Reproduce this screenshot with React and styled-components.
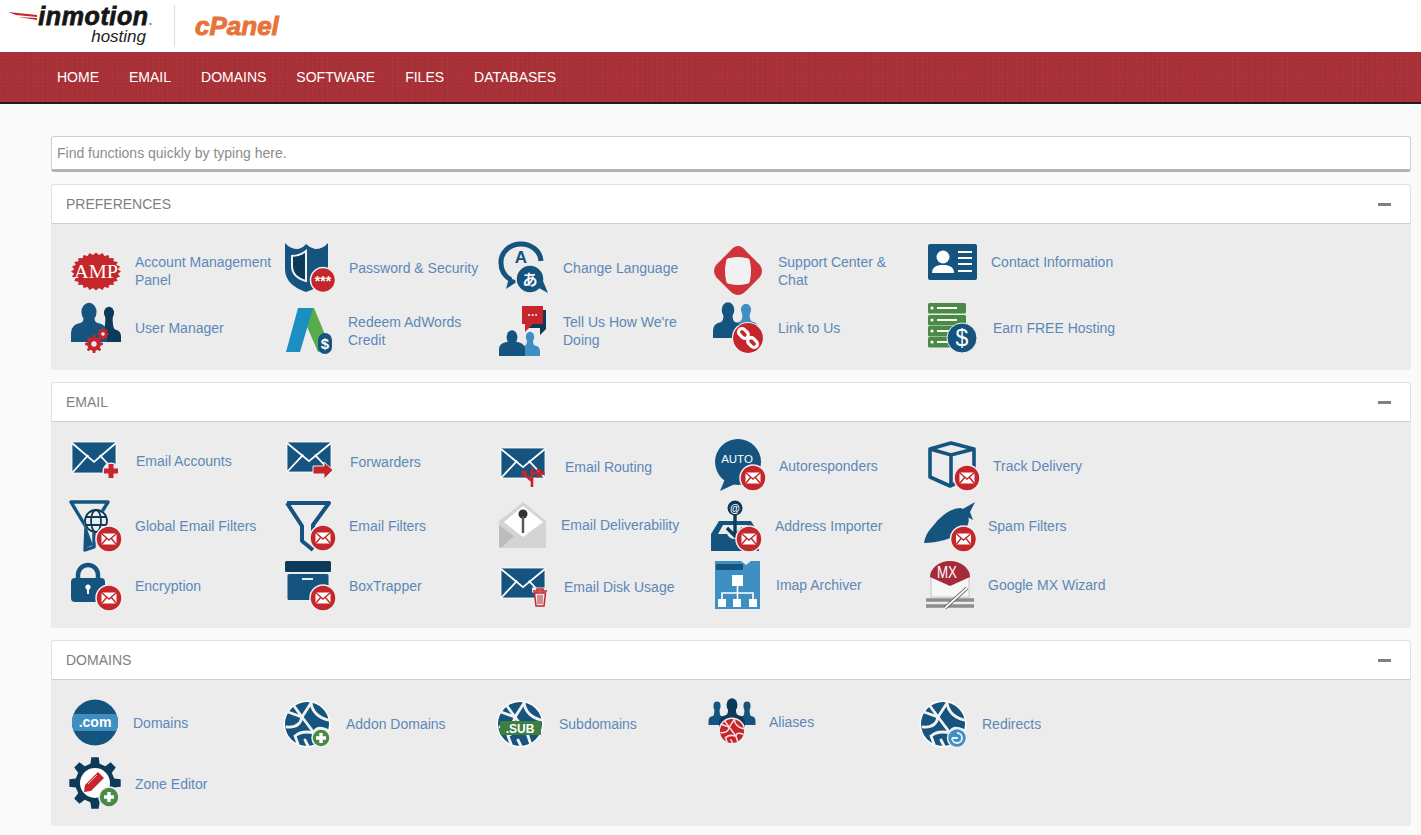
import React from 'react';
import styled, { createGlobalStyle } from 'styled-components';

const NAVY = '#165480';
const DARK = '#0e3a5a';
const RED = '#c4262b';
const GREEN = '#4a8a46';
const SKY = '#3f8fc2';
const PANEL = '#ececec';

const GlobalStyle = createGlobalStyle`
  html, body {
    margin: 0;
    padding: 0;
    background: #fafafa;
    font-family: "Liberation Sans", Arial, sans-serif;
  }
`;

const TopBar = styled.header`
  height: 52px;
  background: #fff;
  display: flex;
  align-items: center;
  padding-left: 8px;
`;

const Swoosh = styled.svg`
  flex: none;
  margin: -20px -29px 0 0;
`;

const Brand = styled.div`
  width: 144px;
  display: flex;
  flex-direction: column;
  align-items: flex-end;
  margin-top: 1px;
`;

const BrandRow = styled.div`
  display: flex;
  align-items: center;
  height: 20px;
`;

const BrandName = styled.span`
  font-size: 25px;
  font-weight: bold;
  font-style: italic;
  letter-spacing: 0.6px;
  color: #161616;
  -webkit-text-stroke: 0.8px #161616;
`;

const BrandDot = styled.span`
  font-size: 12px;
  font-weight: bold;
  color: #777;
  margin-top: 9px;
`;

const BrandSub = styled.span`
  font-size: 17px;
  font-style: italic;
  color: #222;
  line-height: 21px;
  margin-right: 6px;
`;

const Divider = styled.div`
  width: 1px;
  height: 42px;
  background: #ddd;
  margin: 0 20px 0 22px;
`;

const CPanelMark = styled.span`
  font-size: 26px;
  font-weight: bold;
  font-style: italic;
  color: #e8733a;
  -webkit-text-stroke: 1px #e8733a;
`;

const NavBar = styled.nav`
  height: 50px;
  border-bottom: 2px solid #241a1c;
  padding-left: 57px;
  display: flex;
  align-items: center;
  gap: 30px;
  background-color: #aa3138;
  background-image:
    radial-gradient(circle, rgba(0, 0, 0, 0.07) 0.6px, transparent 1px),
    radial-gradient(circle, rgba(255, 255, 255, 0.04) 0.6px, transparent 1px),
    radial-gradient(circle, rgba(0, 0, 0, 0.05) 0.8px, transparent 1.2px);
  background-size: 3px 3px, 5px 4px, 7px 5px;
`;

const NavLink = styled.a`
  color: #fff;
  font-size: 14px;
  text-transform: uppercase;
`;

const Main = styled.main`
  padding: 32px 10px 9px 51px;
  display: flex;
  flex-direction: column;
  gap: 12px;
`;

const Search = styled.input`
  display: block;
  width: 100%;
  box-sizing: border-box;
  height: 36px;
  padding: 0 5px;
  border: 1px solid #cfcfcf;
  border-bottom: 3px solid #b4b4b4;
  border-radius: 3px;
  background: #fff;
  font-family: inherit;
  font-size: 14px;
  outline: none;

  &::placeholder {
    color: #8c8c8c;
    opacity: 1;
  }
`;

const Panel = styled.section`
  border-radius: 3px;
  overflow: hidden;
  background: ${PANEL};
`;

const PanelHead = styled.div`
  height: 40px;
  box-sizing: border-box;
  background: #fff;
  border: 1px solid #e2e2e2;
  border-bottom: 1px solid #cfcfcf;
  border-radius: 3px 3px 0 0;
  padding: 0 19px 0 14px;
  display: flex;
  align-items: center;
  justify-content: space-between;
  font-size: 14px;
  color: #808080;
  text-transform: uppercase;
`;

const Collapse = styled.span`
  width: 13px;
  height: 3px;
  background: #808080;
`;

const PanelBody = styled.div`
  display: grid;
  grid-template-columns: repeat(5, 214px);
  grid-auto-rows: 60px;
  padding: 14px 0 12px 20px;
`;

const Item = styled.a`
  display: flex;
  align-items: center;
`;

const Label = styled.span`
  margin-left: ${(p) => p.$gap}px;
  margin-top: ${(p) => p.$shift * 2}px;
  font-size: 14px;
  line-height: 18px;
  color: #5c88b8;
  white-space: pre-line;
`;

const Glyph = styled.svg`
  width: 50px;
  height: 50px;
  flex: none;
  overflow: visible;
`;

const Icon = ({ children }) => <Glyph viewBox="0 0 50 50">{children}</Glyph>;

const MailBadge = ({ cx = 38, cy = 37, r = 12 }) => (
  <g>
    <circle cx={cx} cy={cy} r={r + 1} fill={RED} stroke="#efefef" strokeWidth="1.5" />
    <rect x={cx - 7.5} y={cy - 5.5} width="15" height="11" rx="1.5" fill="#fff" />
    <path
      d={`M${cx - 7} ${cy - 5}L${cx} ${cy + 1}L${cx + 7} ${cy - 5}M${cx - 7} ${cy + 5}L${cx - 2} ${cy - 1}M${cx + 7} ${cy + 5}L${cx + 2} ${cy - 1}`}
      fill="none"
      stroke={RED}
      strokeWidth="1.4"
    />
  </g>
);

const Envelope = ({ x, y, w = 44, h = 30 }) => (
  <g>
    <rect x={x} y={y} width={w} height={h} fill={NAVY} stroke="#fff" strokeWidth="0.8" />
    <path
      d={`M${x} ${y + 1}L${x + w / 2} ${y + h * 0.64}L${x + w} ${y + 1}M${x} ${y + h}L${x + w * 0.37} ${y + h * 0.42}M${x + w} ${y + h}L${x + w * 0.63} ${y + h * 0.42}`}
      fill="none"
      stroke="#fff"
      strokeWidth="1.8"
    />
  </g>
);

const Person = ({ x, y, w, b, fill }) => (
  <g fill={fill}>
    <ellipse cx={x} cy={y} rx={w * 0.42} ry={w * 0.52} />
    <path
      d={`M${x - w} ${b}V${b - w * 0.5}Q${x - w} ${b - w * 0.95} ${x - w * 0.5} ${b - w * 1.05}Q${x - w * 0.3} ${b - w * 1.1} ${x - w * 0.3} ${y + w * 0.3}H${x + w * 0.3}Q${x + w * 0.3} ${b - w * 1.1} ${x + w * 0.5} ${b - w * 1.05}Q${x + w} ${b - w * 0.95} ${x + w} ${b - w * 0.5}V${b}Z`}
    />
  </g>
);

const gearPath = (cx, cy, r, teeth) => {
  const pts = [];
  const step = (Math.PI * 2) / teeth;
  for (let i = 0; i < teeth; i++) {
    const a = i * step;
    [
      [-0.3, 0.76],
      [-0.18, 1],
      [0.18, 1],
      [0.3, 0.76],
    ].forEach(([o, k]) => {
      pts.push(
        `${(cx + Math.cos(a + o * step) * r * k).toFixed(1)},${(cy + Math.sin(a + o * step) * r * k).toFixed(1)}`,
      );
    });
  }
  return pts.join(' ');
};

const Gear = ({ cx, cy, r, teeth = 8, fill = RED, hole = PANEL }) => (
  <g>
    <polygon points={gearPath(cx, cy, r, teeth)} fill={fill} />
    <circle cx={cx} cy={cy} r={r * 0.3} fill={hole} />
  </g>
);

const burstPoints = () => {
  const pts = [];
  for (let i = 0; i < 48; i++) {
    const a = (i / 48) * Math.PI * 2;
    const k = i % 2 ? 0.88 : 1;
    pts.push(`${(25 + Math.cos(a) * 25 * k).toFixed(1)},${(28.5 + Math.sin(a) * 19 * k).toFixed(1)}`);
  }
  return pts.join(' ');
};

const Globe = ({ cx, cy, r = 22, fill = NAVY, ring = true }) => {
  const k = r / 22;
  return (
    <g>
      {ring && <circle cx={cx} cy={cy} r={r + 1.5} fill="#fff" />}
      <circle cx={cx} cy={cy} r={r} fill={fill} />
      <g
        transform={`translate(${cx} ${cy}) scale(${k})`}
        fill="none"
        stroke={ring ? '#f2f2f2' : '#f7dddd'}
        strokeWidth="2.8"
        strokeLinecap="round"
      >
        <path d="M-19-12L-5-7L4-21" />
        <path d="M-5-7L7 9L11 21" />
        <path d="M-5-7Q-7 4-20 3" />
        <path d="M4-21Q6-8 21-4" />
        <path d="M7 9Q-5 6-12 12L-9 20" />
        <path d="M7 9Q9 1 20 6" />
        <path d="M-2 16L1 22" />
        <path d="M-13-18L-5-7" />
      </g>
    </g>
  );
};

const GreenPlus = ({ cx, cy, r = 9 }) => (
  <g>
    <circle cx={cx} cy={cy} r={r} fill={GREEN} stroke="#f0f0f0" strokeWidth="1.5" />
    <path d={`M${cx - 5} ${cy}H${cx + 5}M${cx} ${cy - 5}V${cy + 5}`} stroke="#fff" strokeWidth="3.4" />
  </g>
);

const AmpIcon = () => (
  <Icon>
    <polygon points={burstPoints()} fill={RED} />
    <text
      x="25"
      y="35"
      textAnchor="middle"
      fontFamily="Liberation Serif"
      fontSize="19"
      fill="#fff"
      textLength="44"
      lengthAdjust="spacingAndGlyphs"
    >
      AMP
    </text>
  </Icon>
);

const ShieldIcon = () => (
  <Icon>
    <path d="M0 0Q5 6 13 6Q18 5 21 1Q25 5 30 6Q38 6 43 0V26Q43 42 21 49Q0 42 0 26Z" fill={NAVY} />
    <path d="M7 13Q15 13 21 8V38Q7 34 7 23Z" fill={DARK} stroke="#f2f2f2" strokeWidth="2" />
    <circle cx="38" cy="37" r="12.5" fill={RED} stroke="#efefef" strokeWidth="1.5" />
    <text x="38" y="43" textAnchor="middle" fontFamily="Liberation Sans" fontSize="14" fontWeight="bold" fill="#fff">
      ***
    </text>
  </Icon>
);

const LanguageIcon = () => (
  <Icon>
    <path d="M12 37Q2 31 2 20A20 18 0 0 1 42 18" fill="none" stroke={NAVY} strokeWidth="5" />
    <path d="M10 35L7 46L19 38Z" fill={NAVY} />
    <text x="22" y="20" textAnchor="middle" fontFamily="Liberation Sans" fontSize="17" fontWeight="bold" fill={NAVY}>
      A
    </text>
    <circle cx="31" cy="36" r="14" fill={NAVY} stroke={PANEL} strokeWidth="1.5" />
    <path d="M38 44L49 50L44 38Z" fill={NAVY} />
    <text x="31" y="42" textAnchor="middle" fontFamily="Noto Sans CJK JP" fontSize="15" fontWeight="bold" fill="#fff">
      あ
    </text>
  </Icon>
);

const SupportIcon = () => (
  <Icon>
    <path d="M25 3Q29 3 33 8L47 22Q51 28 47 34L33 48Q25 56 17 48L3 34Q-1 28 3 22L17 8Q21 3 25 3Z" fill="#d0343a" />
    <path d="M13 19Q13 15 17 15Q25 13 33 15Q37 15 37 19Q39 28 37 37Q37 41 33 41Q25 43 17 41Q13 41 13 37Q11 28 13 19Z" fill="#f1f1f1" />
  </Icon>
);

const ContactIcon = () => (
  <Icon>
    <rect x="1" y="1" width="49" height="36" rx="2" fill={NAVY} />
    <circle cx="16" cy="14" r="6.5" fill="#fff" />
    <path d="M5 30Q5 23 13 22H19Q27 23 27 30Z" fill="#fff" />
    <path d="M31 9H45M31 15H45M31 21H45M31 28H45" stroke="#fff" strokeWidth="2.2" />
  </Icon>
);

const UsersGearIcon = () => (
  <Icon>
    <Person x={38} y={10} w={12} b={39} fill={DARK} />
    <Person x={18} y={9} w={18} b={39} fill={NAVY} />
    <Gear cx={23} cy={41} r={9} />
    <Gear cx={32} cy={31} r={6} />
  </Icon>
);

const AdwordsIcon = () => (
  <Icon>
    <path d="M14 5H29L46 46L33 49Z" fill="#58ac4b" />
    <path d="M13 5H28L15 49H1Z" fill="#1b8fc0" />
    <rect x="33" y="30" width="14" height="21" rx="7" fill={NAVY} />
    <text x="40" y="46" textAnchor="middle" fontFamily="Liberation Sans" fontSize="15" fontWeight="bold" fill="#fff">
      $
    </text>
  </Icon>
);

const FeedbackIcon = () => (
  <Icon>
    <path d="M27 7H47V26L41 32V25H27Z" fill={DARK} />
    <path d="M23 3H44V21H34L26 29V21H23Z" fill={RED} />
    <path d="M29 12H38" stroke="#fff" strokeWidth="1.6" strokeDasharray="2 1.6" />
    <Person x={31} y={34} w={10} b={53} fill={SKY} />
    <Person x={13} y={34} w={13} b={53} fill={NAVY} />
  </Icon>
);

const LinkIcon = () => (
  <Icon>
    <Person x={33} y={7} w={12} b={31} fill={SKY} />
    <Person x={15} y={7} w={15} b={35} fill={NAVY} />
    <circle cx="35" cy="35" r="15.5" fill={RED} stroke="#efefef" strokeWidth="1.2" />
    <g fill="none" stroke="#fff" strokeWidth="3.2" transform="rotate(45 35 35)">
      <rect x="23" y="31.5" width="11" height="7" rx="3.5" />
      <rect x="36" y="31.5" width="11" height="7" rx="3.5" />
    </g>
  </Icon>
);

const HostingIcon = () => (
  <Icon>
    {[0, 12, 23, 34].map((y) => (
      <g key={y}>
        <rect x="1" y={y} width="38" height="10.5" rx="1.5" fill={GREEN} />
        <circle cx="5" cy={y + 5} r="1.6" fill="#fff" />
        <path d={`M10 ${y + 5}H30`} stroke="#fff" strokeWidth="2" />
      </g>
    ))}
    <circle cx="35" cy="35" r="15" fill={NAVY} stroke="#efefef" strokeWidth="1" />
    <text x="35" y="43" textAnchor="middle" fontFamily="Liberation Sans" fontSize="23" fill="#fff">
      $
    </text>
  </Icon>
);

const EmailPlusIcon = () => (
  <Icon>
    <Envelope x={1} y={1} h={31} />
    <circle cx="40" cy="30" r="8.5" fill={PANEL} />
    <path d="M33 30H47M40 23V37" stroke={RED} strokeWidth="5" />
  </Icon>
);

const ForwardIcon = () => (
  <Icon>
    <Envelope x={2} y={1} h={30} />
    <path d="M28 25H39V21L48 29L39 38V33H28Z" fill={RED} stroke={PANEL} strokeWidth="1" />
  </Icon>
);

const RoutingIcon = () => (
  <Icon>
    <Envelope x={2} y={7} h={30} />
    <path d="M24 32L33 40L33 30M33 26V46M33 32L42 32M38 28L44 32L38 36M24 35V31H28" fill="none" stroke={RED} strokeWidth="2.6" />
  </Icon>
);

const AutoIcon = () => (
  <Icon>
    <circle cx="25" cy="21" r="23" fill={NAVY} />
    <path d="M12 38L7 50L24 42Z" fill={NAVY} />
    <text x="24" y="22" textAnchor="middle" fontFamily="Liberation Sans" fontSize="11.5" fill="#fff">
      AUTO
    </text>
    <MailBadge cx={40} cy={37} />
  </Icon>
);

const BoxIcon = () => (
  <Icon>
    <path d="M3 8L24 2L47 8V34L23 45L3 36Z" fill="none" stroke={NAVY} strokeWidth="3.6" strokeLinejoin="round" />
    <path d="M3 8L24 14L47 8M24 14V44" fill="none" stroke={NAVY} strokeWidth="3.6" />
    <MailBadge cx={40} cy={37} />
  </Icon>
);

const GlobalFilterIcon = () => (
  <Icon>
    <path d="M0 1H37L23 24V46L14 49L15 26Z" fill="none" stroke={NAVY} strokeWidth="3.4" strokeLinejoin="round" />
    <path d="M16 28L15 47L22 44Z" fill={NAVY} />
    <circle cx="25" cy="20" r="12" fill={PANEL} />
    <g fill="none" stroke={DARK} strokeWidth="1.8">
      <circle cx="25" cy="20" r="11" />
      <ellipse cx="25" cy="20" rx="5" ry="11" />
      <path d="M14 16H36M14 24H36" />
    </g>
    <MailBadge cx={38} cy={38} />
  </Icon>
);

const FilterIcon = () => (
  <Icon>
    <path d="M2 2H44L28 24V40M2 2L17 25V40L28 49" fill="none" stroke={NAVY} strokeWidth="4" strokeLinejoin="round" />
    <MailBadge cx={38} cy={37} />
  </Icon>
);

const DeliverabilityIcon = () => (
  <Icon>
    <path d="M24 1L47 20V47H3Q0 47 0 43V20Z" fill="#d4d4d4" />
    <path d="M24 5L44 21L24 36L5 21Z" fill="#fff" />
    <path d="M0 24L15 35L2 47Q0 47 0 43Z" fill="#bcbcbc" />
    <circle cx="24" cy="13" r="4.5" fill="#333" />
    <path d="M24 15V32" stroke="#555" strokeWidth="2.4" />
  </Icon>
);

const ImporterIcon = () => (
  <Icon>
    <path d="M6 20H38L46 33V50H-2V33Z" fill={NAVY} />
    <path d="M5 33L10 24H34L39 33H30Q28 38 22 38Q16 38 14 33Z" fill={PANEL} />
    <path d="M22 10V34M14 27L22 35L30 27" fill="none" stroke={DARK} strokeWidth="3.4" />
    <circle cx="22" cy="7" r="7.5" fill={DARK} />
    <text x="22" y="10.5" textAnchor="middle" fontFamily="Liberation Sans" fontSize="10" fontWeight="bold" fill="#fff">
      @
    </text>
    <MailBadge cx={36} cy={38} />
  </Icon>
);

const SpamIcon = () => (
  <Icon>
    <path d="M-3 42C-1 30 6 26 10 20C16 14 24 7 34 7C44 12 44 24 36 30C26 38 10 42-3 42Z" fill={NAVY} />
    <path d="M34 9L48 1L43 11L46 19L37 14Z" fill={NAVY} />
    <MailBadge cx={36.5} cy={38} />
  </Icon>
);

const LockIcon = () => (
  <Icon>
    <path d="M7 19V14A10 10 0 0 1 27 14V19" fill="none" stroke={NAVY} strokeWidth="4.5" />
    <rect x="0" y="17" width="34" height="24" rx="4" fill={NAVY} />
    <circle cx="17" cy="26" r="2.6" fill="#fff" />
    <path d="M17 27V33" stroke="#fff" strokeWidth="2" />
    <MailBadge cx={38} cy={37} />
  </Icon>
);

const ArchiveBoxIcon = () => (
  <Icon>
    <rect x="0" y="0" width="46" height="11" rx="1.5" fill={DARK} />
    <rect x="2.5" y="13" width="41" height="26" rx="1.5" fill={NAVY} />
    <path d="M17 18H28" stroke="#fff" strokeWidth="1.8" />
    <MailBadge cx={38} cy={37} />
  </Icon>
);

const EmailTrashIcon = () => (
  <Icon>
    <Envelope x={2} y={7} h={30} />
    <path d="M33 29H49" stroke={PANEL} strokeWidth="5" />
    <path d="M34 30H48M38 30V28H44V30M35.5 32L37 45H45L46.5 32Z" fill={PANEL} stroke={RED} strokeWidth="1.5" />
    <path d="M39 34V43M41 34V43M43 34V43" stroke={RED} strokeWidth="1" />
  </Icon>
);

const ImapIcon = () => (
  <Icon>
    <path d="M2 0H28L33 4L38 0H47V48H2Z" fill={SKY} />
    <rect x="3" y="3" width="27" height="6" rx="1" fill={NAVY} />
    <rect x="19" y="14" width="11" height="11" fill="#fff" />
    <path d="M24.5 25V32M9 38V32H40V38M24.5 32V38" fill="none" stroke="#fff" strokeWidth="1.6" />
    <path d="M5 38H13V46H5ZM20 38H28V46H20ZM36 38H44V46H36Z" fill="#fff" />
  </Icon>
);

const MxIcon = () => (
  <Icon>
    <rect x="4" y="11" width="38" height="25" fill="#f6f6f6" stroke="#bbb" strokeWidth="0.8" />
    <path d="M3 16A20 16 0 0 1 43 16L23 25Z" fill="#a52a3a" />
    <text
      x="20"
      y="17"
      textAnchor="middle"
      fontFamily="Liberation Sans"
      fontSize="17"
      fill="#fff"
      textLength="20"
      lengthAdjust="spacingAndGlyphs"
    >
      MX
    </text>
    <path d="M-1 39H47M-1 45H47" stroke="#8b8d8e" strokeWidth="3.4" />
    <path d="M18 47L40 27" stroke="#555" strokeWidth="3.6" />
    <path d="M18 47L40 27" stroke="#fff" strokeWidth="1.8" />
  </Icon>
);

const ComIcon = () => (
  <Icon>
    <circle cx="24" cy="23.5" r="23" fill={NAVY} />
    <path d="M2.6 15H45.4A23 23 0 0 1 45.4 32H2.6A23 23 0 0 1 2.6 15Z" fill={SKY} />
    <text x="24" y="28" textAnchor="middle" fontFamily="Liberation Sans" fontSize="14" fontWeight="bold" fill="#fff">
      .com
    </text>
  </Icon>
);

const AddonIcon = () => (
  <Icon>
    <Globe cx={22} cy={25} />
    <GreenPlus cx={36} cy={39} />
  </Icon>
);

const SubIcon = () => (
  <Icon>
    <Globe cx={21} cy={25} />
    <rect x="1" y="22" width="41" height="14" rx="1" fill="#3c8040" />
    <text x="21" y="34" textAnchor="middle" fontFamily="Liberation Sans" fontSize="12" fontWeight="bold" fill="#fff">
      .SUB
    </text>
  </Icon>
);

const AliasIcon = () => (
  <Icon>
    <Person x={4} y={7} w={8.5} b={26} fill={NAVY} />
    <Person x={34} y={7} w={8.5} b={26} fill={NAVY} />
    <Person x={19} y={6} w={13} b={30} fill={DARK} />
    <circle cx="19" cy="32" r="13.5" fill="#efefef" />
    <Globe cx={19} cy={32} r={12} fill={RED} ring={false} />
  </Icon>
);

const RedirectIcon = () => (
  <Icon>
    <Globe cx={16} cy={25} />
    <circle cx="30" cy="39" r="9.5" fill={SKY} stroke="#f0f0f0" strokeWidth="1.5" />
    <path d="M25 39A5 5 0 1 0 30 34" fill="none" stroke="#eaf3f9" strokeWidth="1.8" />
    <path d="M25 39H31" stroke="#eaf3f9" strokeWidth="1.8" />
  </Icon>
);

const ZoneIcon = () => (
  <Icon>
    <polygon points={gearPath(24, 24, 26, 8)} fill={DARK} />
    <circle cx="24" cy="24" r="15" fill="#fff" />
    <path d="M13 33L14 26L27 13L33 19L20 32Z" fill={RED} />
    <path d="M17 25L26 16" stroke="#f3b6b6" strokeWidth="1" />
    <GreenPlus cx={38} cy={38} r={10} />
  </Icon>
);

// gap and shift are the small per-item nudges of the original page
const sections = [
  {
    title: 'Preferences',
    items: [
      { label: 'Account Management\nPanel', Art: AmpIcon, gap: 14, shift: 3 },
      { label: 'Password & Security', Art: ShieldIcon, gap: 14, shift: 0 },
      { label: 'Change Language', Art: LanguageIcon, gap: 14, shift: 0 },
      { label: 'Support Center &\nChat', Art: SupportIcon, gap: 15, shift: 3 },
      { label: 'Contact Information', Art: ContactIcon, gap: 14, shift: -6 },
      { label: 'User Manager', Art: UsersGearIcon, gap: 14, shift: 0 },
      { label: 'Redeem AdWords\nCredit', Art: AdwordsIcon, gap: 13, shift: 3 },
      { label: "Tell Us How We're\nDoing", Art: FeedbackIcon, gap: 14, shift: 3 },
      { label: 'Link to Us', Art: LinkIcon, gap: 15, shift: 0 },
      { label: 'Earn FREE Hosting', Art: HostingIcon, gap: 16, shift: 0 },
    ],
  },
  {
    title: 'Email',
    items: [
      { label: 'Email Accounts', Art: EmailPlusIcon, gap: 15, shift: -5 },
      { label: 'Forwarders', Art: ForwardIcon, gap: 15, shift: -4 },
      { label: 'Email Routing', Art: RoutingIcon, gap: 16, shift: 1 },
      { label: 'Autoresponders', Art: AutoIcon, gap: 16, shift: 0 },
      { label: 'Track Delivery', Art: BoxIcon, gap: 16, shift: 0 },
      { label: 'Global Email Filters', Art: GlobalFilterIcon, gap: 14, shift: 0 },
      { label: 'Email Filters', Art: FilterIcon, gap: 14, shift: 0 },
      { label: 'Email Deliverability', Art: DeliverabilityIcon, gap: 12, shift: -1 },
      { label: 'Address Importer', Art: ImporterIcon, gap: 12, shift: 0 },
      { label: 'Spam Filters', Art: SpamIcon, gap: 11, shift: 0 },
      { label: 'Encryption', Art: LockIcon, gap: 14, shift: 0 },
      { label: 'BoxTrapper', Art: ArchiveBoxIcon, gap: 14, shift: 0 },
      { label: 'Email Disk Usage', Art: EmailTrashIcon, gap: 15, shift: 1 },
      { label: 'Imap Archiver', Art: ImapIcon, gap: 13, shift: -1 },
      { label: 'Google MX Wizard', Art: MxIcon, gap: 11, shift: -1 },
    ],
  },
  {
    title: 'Domains',
    items: [
      { label: 'Domains', Art: ComIcon, gap: 12, shift: -1 },
      { label: 'Addon Domains', Art: AddonIcon, gap: 11, shift: 0 },
      { label: 'Subdomains', Art: SubIcon, gap: 10, shift: 0 },
      { label: 'Aliases', Art: AliasIcon, gap: 6, shift: -2 },
      { label: 'Redirects', Art: RedirectIcon, gap: 5, shift: 0 },
      { label: 'Zone Editor', Art: ZoneIcon, gap: 14, shift: 0 },
    ],
  },
];

const navItems = ['Home', 'Email', 'Domains', 'Software', 'Files', 'Databases'];

export default function App() {
  return (
    <>
      <GlobalStyle />
      <TopBar>
        <Swoosh width="29" height="12" viewBox="0 0 29 12">
          <path d="M0 2L29 5V7L8 5Z" fill="#c4262b" />
          <path d="M10 7L29 8V10Z" fill="#c4262b" />
        </Swoosh>
        <Brand>
          <BrandRow>
            <BrandName>inmotion</BrandName>
            <BrandDot>.</BrandDot>
          </BrandRow>
          <BrandSub>hosting</BrandSub>
        </Brand>
        <Divider />
        <CPanelMark>cPanel</CPanelMark>
      </TopBar>
      <NavBar>
        {navItems.map((name) => (
          <NavLink key={name}>{name}</NavLink>
        ))}
      </NavBar>
      <Main>
        <Search placeholder="Find functions quickly by typing here." />
        {sections.map((section) => (
          <Panel key={section.title}>
            <PanelHead>
              {section.title}
              <Collapse />
            </PanelHead>
            <PanelBody>
              {section.items.map(({ label, Art, gap, shift }) => (
                <Item key={label}>
                  <Art />
                  <Label $gap={gap} $shift={shift}>
                    {label}
                  </Label>
                </Item>
              ))}
            </PanelBody>
          </Panel>
        ))}
      </Main>
    </>
  );
}
